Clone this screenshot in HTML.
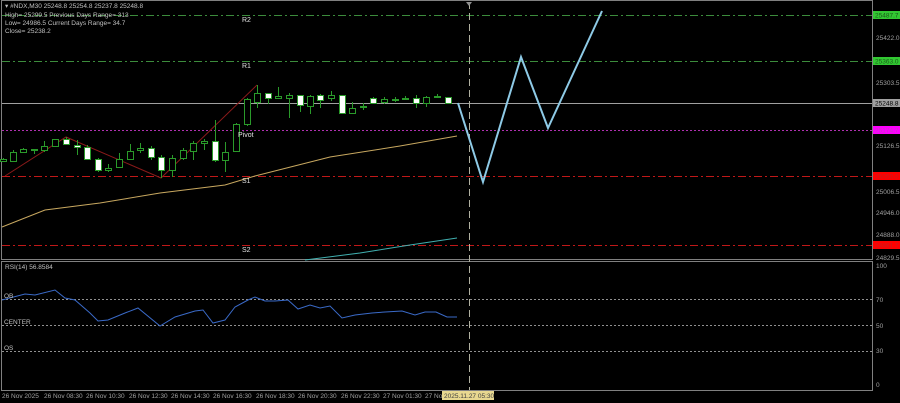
<!DOCTYPE html>
<html><head><style>
html,body{margin:0;padding:0;background:#000;width:900px;height:403px;overflow:hidden}
svg{display:block;font-family:"Liberation Sans",sans-serif}
</style></head><body>
<svg width="900" height="403" viewBox="0 0 900 403" xmlns="http://www.w3.org/2000/svg">
<rect width="900" height="403" fill="#000"/>
<rect x="1.5" y="0.5" width="871" height="259" fill="none" stroke="#808080" stroke-width="1"/>
<rect x="1.5" y="261.5" width="871" height="129" fill="none" stroke="#808080" stroke-width="1"/>
<g stroke-width="1" fill="none">
<line x1="2" y1="15.5" x2="872" y2="15.5" stroke="#3c8c3c" stroke-dasharray="8,3,2,3"/>
<line x1="2" y1="61.5" x2="872" y2="61.5" stroke="#3c8c3c" stroke-dasharray="8,3,2,3"/>
<line x1="2" y1="103.5" x2="872" y2="103.5" stroke="#a0a0a0"/>
<line x1="2" y1="130.5" x2="872" y2="130.5" stroke="#b030b0" stroke-dasharray="2,2"/>
<line x1="2" y1="176.5" x2="872" y2="176.5" stroke="#c01818" stroke-dasharray="8,3,2,3"/>
<line x1="2" y1="245.5" x2="872" y2="245.5" stroke="#c01818" stroke-dasharray="8,3,2,3"/>
<line x1="2" y1="299.5" x2="872" y2="299.5" stroke="#909090" stroke-dasharray="2,2"/>
<line x1="2" y1="325.5" x2="872" y2="325.5" stroke="#909090" stroke-dasharray="2,2"/>
<line x1="2" y1="351.5" x2="872" y2="351.5" stroke="#909090" stroke-dasharray="2,2"/>
<line x1="469.5" y1="2" x2="469.5" y2="390" stroke="#b0b0a0" stroke-dasharray="7,4"/>
</g>
<polyline points="5,176 66,137 161,178 257,85" fill="none" stroke="#8b1a1a" stroke-width="1"/>
<polyline points="2,227 45,210 100,203 160,193 225,185 255,176 330,157 400,146 457,136" fill="none" stroke="#c8a860" stroke-width="1"/>
<polyline points="305,260 360,253 410,245 457,238" fill="none" stroke="#40b0b0" stroke-width="1"/>
<g stroke="#2a9a2a" stroke-width="1" id="c"></g>
<polyline points="458,103 483,182 521,57 548,128 602,11" fill="none" stroke="#8ecae6" stroke-width="2"/>
<polyline points="2,300 25,294 35,295 55,290 65,298 75,300 90,313 98,321 108,320 125,313 138,308 160,326 175,317 195,311 203,310 213,323 225,320 235,307 248,300 255,297 265,301 275,301 288,300 298,309 310,305 320,308 330,306 342,318 355,315 372,313 385,312 402,311 415,315 425,312 436,312 447,317 457,317" fill="none" stroke="#3a6ac8" stroke-width="1"/>
<g font-size="6.5" fill="#c0c0c0">
<text x="5" y="8">▾ #NDX,M30  25248.8 25254.8 25237.8 25248.8</text>
<text x="5" y="17">High= 25299.5    Previous Days Range= 313</text>
<text x="5" y="25">Low= 24986.5    Current Days Range= 34.7</text>
<text x="5" y="33">Close= 25238.2</text>
<text x="5" y="269">RSI(14) 56.8584</text>
<text x="4" y="298">OB</text>
<text x="4" y="324">CENTER</text>
<text x="4" y="350">OS</text>
</g>
<g font-size="7" fill="#e0e0e0">
<text x="242" y="22">R2</text><text x="242" y="68">R1</text>
<text x="238" y="137">Pivot</text><text x="242" y="183">S1</text><text x="242" y="252">S2</text>
</g>
<g font-size="6.5" fill="#a0a0a0">
<text x="876" y="40">25422.0</text><text x="876" y="85">25303.5</text>
<text x="876" y="148">25126.5</text><text x="876" y="194">25006.5</text>
<text x="876" y="215">24946.0</text><text x="876" y="237">24888.0</text><text x="876" y="260">24829.5</text>
<text x="876" y="268">100</text><text x="876" y="302">70</text><text x="876" y="328">50</text><text x="876" y="353">30</text><text x="876" y="387">0</text>
</g>
<g font-size="6.5">
<rect x="873" y="11" width="27" height="8" fill="#32c832"/><text x="875" y="17.5" fill="#1a5a1a">25487.7</text>
<rect x="873" y="57" width="27" height="8" fill="#32c832"/><text x="875" y="63.5" fill="#1a5a1a">25363.0</text>
<rect x="873" y="99" width="27" height="8" fill="#a0a0a0"/><text x="875" y="105.5" fill="#000">25248.8</text>
<rect x="873" y="126" width="27" height="8" fill="#ff00ff"/><text x="875" y="132.5" fill="#c040c0">25174.7</text>
<rect x="873" y="172" width="27" height="8" fill="#ff0000"/><text x="875" y="178.5" fill="#c02020">25050.0</text>
<rect x="873" y="241" width="27" height="8" fill="#ff0000"/><text x="875" y="247.5" fill="#c02020">24861.7</text>
</g>
<g font-size="6.5" fill="#a0a0a0">
<text x="2" y="398">26 Nov 2025</text><text x="44" y="398">26 Nov 08:30</text><text x="86" y="398">26 Nov 10:30</text>
<text x="129" y="398">26 Nov 12:30</text><text x="171" y="398">26 Nov 14:30</text><text x="213" y="398">26 Nov 16:30</text>
<text x="256" y="398">26 Nov 18:30</text><text x="298" y="398">26 Nov 20:30</text><text x="341" y="398">26 Nov 22:30</text>
<text x="383" y="398">27 Nov 01:30</text><text x="425" y="398">27 No</text>
</g>
<rect x="442" y="391" width="52" height="9" fill="#e8d890"/>
<text x="444" y="398" font-size="6.5" fill="#404040">2025.11.27 05:30</text>
<polygon points="466,2 472,2 469,6" fill="#909090"/>
</svg>
<script>
var d=[[3,158,162,159,161,0],[13,150,162,152,161,0],[23,148,153,149,152,0],[34,149,154,149,150,0],[44,141,152,146,150,0],[55,139,146,139,146,0],[66,137,145,139,144,1],[77,140,155,145,147,1],[87,145,160,147,159,1],[98,158,172,159,170,1],[108,164,172,168,170,0],[119,153,168,159,167,0],[130,144,160,151,159,0],[140,143,153,148,150,0],[151,146,160,148,157,1],[161,155,178,157,170,1],[172,155,177,158,170,0],[183,148,160,150,158,0],[193,141,160,143,151,0],[204,139,150,141,143,0],[215,120,162,141,160,1],[225,142,172,152,160,0],[236,123,152,124,151,0],[247,98,126,99,124,0],[257,85,108,93,102,0],[268,93,104,93,98,1],[278,87,99,96,98,0],[289,93,118,95,98,0],[300,95,112,95,105,1],[310,95,114,96,106,0],[320,94,108,95,100,1],[331,91,101,95,98,0],[342,95,113,95,113,1],[352,102,114,108,113,0],[363,103,110,106,107,0],[373,97,104,98,103,1],[384,97,104,99,102,0],[395,97,102,99,100,0],[405,96,100,98,99,0],[416,95,108,98,103,1],[426,96,107,97,103,0],[437,94,98,96,97,0],[448,97,103,97,103,1]];
var g=document.getElementById('c'),s='';
d.forEach(function(c){var x=c[0];s+='<line x1="'+(x+.5)+'" y1="'+c[1]+'" x2="'+(x+.5)+'" y2="'+c[2]+'"/>';
var h=Math.max(1,c[4]-c[3]);s+='<rect x="'+(x-2.5)+'" y="'+(c[3]+.5)+'" width="6" height="'+h+'" fill="'+(c[5]?'#fff':'#000')+'"/>';});
g.innerHTML=s;
</script>
</body></html>
